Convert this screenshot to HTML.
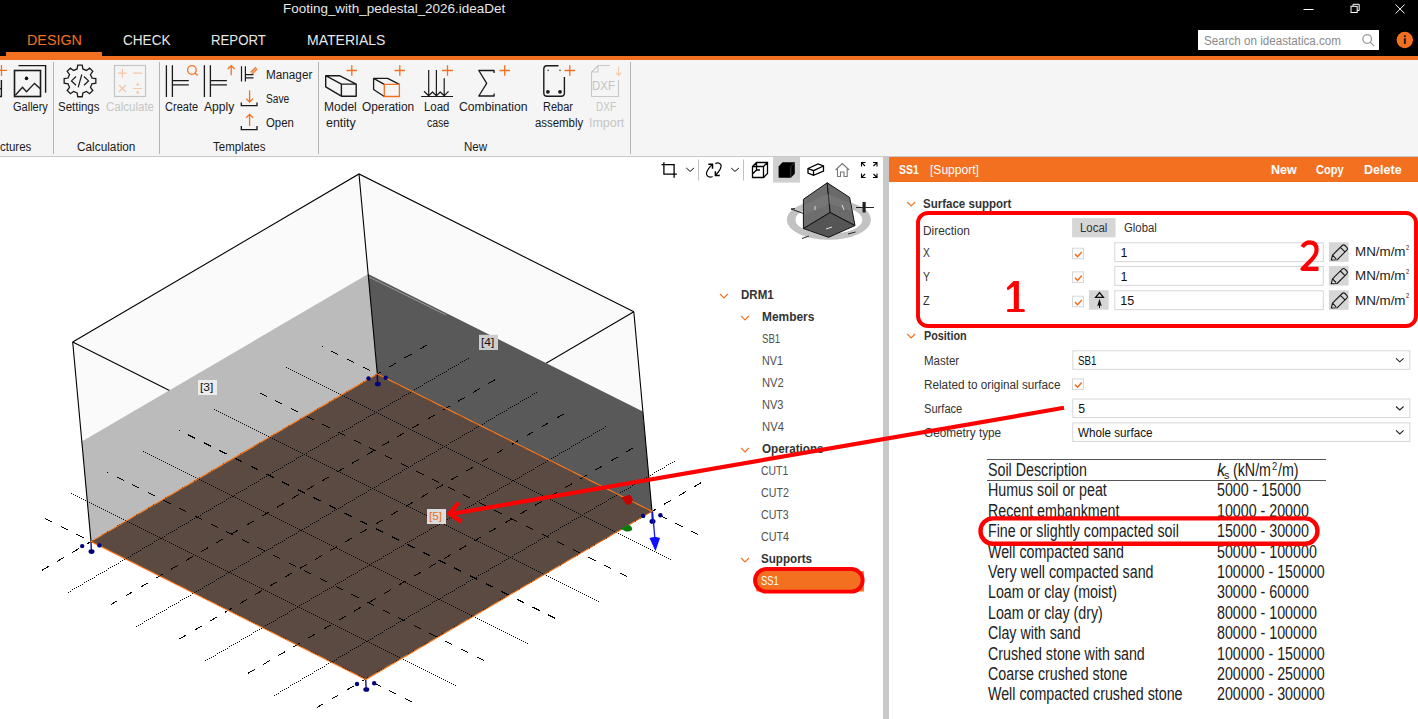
<!DOCTYPE html><html><head><meta charset="utf-8"><style>
*{margin:0;padding:0;box-sizing:border-box}
html,body{width:1418px;height:719px;overflow:hidden;background:#fff;font-family:"Liberation Sans",sans-serif}
.t{position:absolute;white-space:nowrap;line-height:0;transform-origin:0 0}
svg{position:absolute;left:0;top:0}
.ds{stroke-width:1;stroke-dasharray:8 9.5;stroke-dashoffset:8;shape-rendering:crispEdges}
.dt{stroke-width:1;stroke-dasharray:1.3 1.3;shape-rendering:crispEdges}
</style></head><body><div style="position:absolute;left:0px;top:0px;width:1418px;height:56px;background:#000"></div>
<div class="t" style="left:282.80px;top:8.62px;font-size:13.5px;color:#e8e8e8;transform:scaleX(0.9966);">Footing_with_pedestal_2026.ideaDet</div>
<div class="t" style="left:26.50px;top:40.10px;font-size:15px;color:#f37021;transform:scaleX(0.9544);">DESIGN</div>
<div class="t" style="left:122.50px;top:40.10px;font-size:15px;color:#e8e8e8;transform:scaleX(0.9048);">CHECK</div>
<div class="t" style="left:210.70px;top:40.10px;font-size:15px;color:#e8e8e8;transform:scaleX(0.8803);">REPORT</div>
<div class="t" style="left:306.70px;top:40.10px;font-size:15px;color:#e8e8e8;transform:scaleX(0.9342);">MATERIALS</div>
<div style="position:absolute;left:6px;top:52px;width:96px;height:4px;background:#f37021"></div>
<div style="position:absolute;left:0px;top:56px;width:1418px;height:4px;background:#f37021"></div>
<div style="position:absolute;left:1198px;top:30px;width:181px;height:20px;background:#fff"></div>
<div class="t" style="left:1204.00px;top:40.77px;font-size:12.5px;color:#8a8a8a;transform:scaleX(0.9300);">Search on ideastatica.com</div>
<svg width="1418" height="719" viewBox="0 0 1418 719"><g fill="none" stroke="#9a9a9a" stroke-width="1.3"><circle cx="1367.2" cy="39" r="4.3"/><path d="M1370.2 42.1 L1373.8 45.7"/></g>
<circle cx="1404.8" cy="40" r="8.2" fill="#f37021"/><rect x="1403.9" y="38.3" width="1.9" height="5.6" fill="#1a1a1a"/><rect x="1403.9" y="35.2" width="1.9" height="1.9" fill="#1a1a1a"/>
<g fill="none" stroke="#fff" stroke-width="1"><path d="M1303.5 9.5 H1313.5"/><rect x="1351" y="6.3" width="6.2" height="6.2"/><path d="M1353 6.3 V4.3 H1359.2 V10.5 H1357.2"/><path d="M1395.6 4.5 L1404.6 13.5 M1404.6 4.5 L1395.6 13.5"/></g></svg>
<div style="position:absolute;left:0px;top:60px;width:1418px;height:96px;background:#f5f5f5"></div>
<div style="position:absolute;left:0px;top:156px;width:1418px;height:1px;background:#c9c9c9"></div>
<div style="position:absolute;left:53px;top:62px;width:1px;height:92px;background:#b4b4b4"></div>
<div style="position:absolute;left:159px;top:62px;width:1px;height:92px;background:#b4b4b4"></div>
<div style="position:absolute;left:318px;top:62px;width:1px;height:92px;background:#b4b4b4"></div>
<div style="position:absolute;left:630px;top:62px;width:1px;height:92px;background:#b4b4b4"></div>
<div class="t" style="left:0.30px;top:146.74px;font-size:12px;color:#1a1a1a;transform:scaleX(0.9602);">ctures</div>
<div class="t" style="left:76.80px;top:146.74px;font-size:12px;color:#1a1a1a;transform:scaleX(0.9842);">Calculation</div>
<div class="t" style="left:213.20px;top:146.74px;font-size:12px;color:#1a1a1a;transform:scaleX(0.9576);">Templates</div>
<div class="t" style="left:463.50px;top:147.24px;font-size:12px;color:#1a1a1a;transform:scaleX(0.9643);">New</div>
<div class="t" style="left:12.80px;top:107.14px;font-size:12px;color:#1a1a1a;transform:scaleX(0.9175);">Gallery</div>
<div class="t" style="left:58.40px;top:107.14px;font-size:12px;color:#1a1a1a;transform:scaleX(0.9567);">Settings</div>
<div class="t" style="left:164.70px;top:107.14px;font-size:12px;color:#1a1a1a;transform:scaleX(0.9194);">Create</div>
<div class="t" style="left:204.40px;top:107.14px;font-size:12px;color:#1a1a1a;transform:scaleX(1.0067);">Apply</div>
<div class="t" style="left:265.60px;top:75.14px;font-size:12px;color:#1a1a1a;transform:scaleX(0.9780);">Manager</div>
<div class="t" style="left:265.60px;top:98.74px;font-size:12px;color:#1a1a1a;transform:scaleX(0.8480);">Save</div>
<div class="t" style="left:265.60px;top:123.14px;font-size:12px;color:#1a1a1a;transform:scaleX(0.9475);">Open</div>
<div class="t" style="left:323.60px;top:107.14px;font-size:12px;color:#1a1a1a;transform:scaleX(1.0031);">Model</div>
<div class="t" style="left:326.00px;top:122.54px;font-size:12px;color:#1a1a1a;transform:scaleX(1.0356);">entity</div>
<div class="t" style="left:362.30px;top:107.14px;font-size:12px;color:#1a1a1a;transform:scaleX(0.9890);">Operation</div>
<div class="t" style="left:424.00px;top:107.14px;font-size:12px;color:#1a1a1a;transform:scaleX(0.9551);">Load</div>
<div class="t" style="left:426.50px;top:122.54px;font-size:12px;color:#1a1a1a;transform:scaleX(0.8768);">case</div>
<div class="t" style="left:458.60px;top:107.14px;font-size:12px;color:#1a1a1a;transform:scaleX(1.0181);">Combination</div>
<div class="t" style="left:543.00px;top:107.14px;font-size:12px;color:#1a1a1a;transform:scaleX(0.9174);">Rebar</div>
<div class="t" style="left:534.60px;top:122.54px;font-size:12px;color:#1a1a1a;transform:scaleX(0.9507);">assembly</div>
<div class="t" style="left:105.70px;top:107.14px;font-size:12px;color:#c6c6c6;transform:scaleX(0.9592);">Calculate</div>
<div class="t" style="left:596.00px;top:107.14px;font-size:12px;color:#c6c6c6;transform:scaleX(0.8333);">DXF</div>
<div class="t" style="left:589.40px;top:122.54px;font-size:12px;color:#c6c6c6;transform:scaleX(1.0376);">Import</div>
<div class="t" style="left:591.50px;top:86.14px;font-size:12px;color:#c4c4c4;transform:scaleX(0.9583);">DXF</div>
<svg width="1418" height="719" viewBox="0 0 1418 719">
<g fill="none" stroke="#1a1a1a" stroke-width="1.4">
 <path d="M1.4 80 V96.5 H0 M0 88.6 H1.4"/>
 <rect x="14.5" y="70.5" width="26" height="26" stroke-width="1.6"/>
 <path d="M18.5 65.6 H45.6 V92.7" stroke-width="1.4"/>
 <path d="M15.3 95.3 L22.5 87.3 L26.5 91.7 L34.5 83.4 L40.3 88.8" stroke-width="1.3"/>
 <path d="M91.96 78.03 L95.84 78.65 L95.84 83.15 L91.96 83.77 L90.49 87.33 L92.79 90.51 L89.61 93.69 L86.43 91.39 L82.87 92.86 L82.25 96.74 L77.75 96.74 L77.13 92.86 L73.57 91.39 L70.39 93.69 L67.21 90.51 L69.51 87.33 L68.04 83.77 L64.16 83.15 L64.16 78.65 L68.04 78.03 L69.51 74.47 L67.21 71.29 L70.39 68.11 L73.57 70.41 L77.13 68.94 L77.75 65.06 L82.25 65.06 L82.87 68.94 L86.43 70.41 L89.61 68.11 L92.79 71.29 L90.49 74.47Z" stroke-width="1.3"/>
 <path d="M76 76.5 L71.5 80.9 L76 85.3 M84 76.5 L88.5 80.9 L84 85.3 M81.8 74.5 L78.2 87.3" stroke-width="1.2"/>
 <path d="M166.4 65.3 V96.9 M172.4 65.3 V96.9 M172.4 80.6 H188.8 M172.4 84.8 H188.8" stroke-width="1.3"/>
 <path d="M204.4 65.3 V96.9 M210.4 65.3 V96.9 M210.4 80.6 H226.9 M210.4 84.8 H226.9" stroke-width="1.3"/>
 <path d="M241.5 66.3 V81.6 M245.4 66.3 V81.6 M245.4 74.6 H253.5 M245.4 77.8 H253.5" stroke-width="1.2"/>
 <path d="M241.3 102.4 V105.6 H257 V102.4 M241.3 126 V129.6 H257 V126" stroke-width="1.3"/>
</g>
<g fill="none" stroke="#f37021" stroke-width="1.3">
 <path d="M0 70.4 H7 M1.5 65 V76"/>
 <circle cx="191.9" cy="70" r="4.3"/><path d="M194.8 73 L197.6 75.6"/>
 <path d="M231.2 65.6 V75.3 M227.8 69 L231.2 65.6 L234.6 69"/>
 <path d="M250.6 72.5 L256 67.3 M252 74 L257.2 68.8"/>
 <path d="M249.6 90.3 V102 M246.2 98.6 L249.6 102 L253 98.6"/>
 <path d="M249.6 114.3 V126 M246.2 117.7 L249.6 114.3 L253 117.7"/>
</g>
<g fill="none" stroke="#c4c4c4" stroke-width="1.2"><rect x="114.5" y="65.5" width="31" height="31"/></g>
<g fill="none" stroke="#f7c6a6" stroke-width="1.2">
 <path d="M117.9 73.2 H126.9 M122.4 68.7 V77.7 M133.2 73.2 H142.2 M118.9 85 L125.9 92 M125.9 85 L118.9 92 M133.2 88.5 H142.2"/>
 <circle cx="137.7" cy="84.6" r="0.7" fill="#f7c6a6"/><circle cx="137.7" cy="92.4" r="0.7" fill="#f7c6a6"/>
</g>

<g fill="none" stroke="#1a1a1a" stroke-width="1.3" stroke-linejoin="round">
 <path d="M325.7 75.7 H339.4 L356.2 84.1 V96.2 H341.4 L325.7 86.8 Z M325.7 75.7 L341.4 84.1 H356.2 M341.4 84.1 V96.2" stroke-width="1.4"/>
 <path d="M384.3 84.4 L373.6 78.4 H387.6 L399.4 84.4 M373.6 78.4 V89.5 L384.3 96.5"/>
 <path d="M428.7 70.1 V95.5 M436.4 70.1 V95.5 M444.2 78.3 V95.5 M421.2 96.5 H453 M424 91.3 L428.7 95.8 L432.5 92 L436.4 95.8 L440.2 92 L444.2 95.8 L448.5 91.3" stroke-width="1.2"/>
 <path d="M494.1 73 V70.5 H478.8 L486.7 83.4 L478.8 96 H494.1 V93.5" stroke-width="1.3"/>
 <path d="M558.5 65.8 H547 Q543.8 65.8 543.8 69 V93 Q543.8 96.2 547 96.2 H561.2 Q564.4 96.2 564.4 93 V77" stroke-width="1.4"/>
</g>
<circle cx="26.5" cy="78.4" r="1.8" fill="#111"/>
<g fill="#1a1a1a"><circle cx="547.9" cy="91.8" r="1.9"/><circle cx="560" cy="91.8" r="1.9"/><circle cx="548.1" cy="70.2" r="0.7"/><circle cx="560" cy="70.2" r="0.7"/></g>
<g fill="none" stroke="#f37021" stroke-width="1.3">
 <path d="M384.3 84.4 H399.4 V96.5 H384.3 Z" stroke-width="1.3"/>
 <path d="M346.5 70.5 H357 M351.8 65.3 V75.8"/>
 <path d="M394.5 70.5 H405 M399.8 65.3 V75.8"/>
 <path d="M442 70.5 H453 M447.5 65.3 V75.8"/>
 <path d="M499.5 70.5 H510 M504.7 65.3 V75.8"/>
 <path d="M564.5 70.5 H575 M569.8 65.3 V75.8"/>
</g>
<g fill="none" stroke="#c8c8c8" stroke-width="1.1">
 <path d="M610 65.5 H598 L591.5 72 V96.5 H618.5 V80 M591.5 72 H598 V65.5"/>
</g>
<path d="M618.6 66.5 V75.5 M615.8 72.7 L618.6 75.5 L621.4 72.7" stroke="#f5c7a8" stroke-width="1.1" fill="none"/>
</svg>
<div style="position:absolute;left:0px;top:157px;width:883px;height:562px;background:#fff"></div>
<div style="position:absolute;left:883px;top:157px;width:6px;height:562px;background:#c8c8c8"></div>
<div style="position:absolute;left:889px;top:157px;width:529px;height:562px;background:#fff"></div>
<svg width="1418" height="719" viewBox="0 0 1418 719"><defs><clipPath id="vp"><rect x="0" y="157" width="883" height="562"/></clipPath></defs><g clip-path="url(#vp)"><polygon points="72.70,342.00 359.00,174.00 633.80,311.80 652.00,511.40 365.80,679.50 91.00,541.60" fill="#fafafa"/><g stroke="#000" stroke-width="1.1" fill="none"><polyline points="72.70,342.00 359.00,174.00 633.80,311.80"/><line x1="72.7" y1="342.0" x2="347.5" y2="479.9"/><line x1="633.8" y1="311.8" x2="347.5" y2="479.9"/></g><polygon points="81.83,441.60 368.13,274.00 377.30,374.00 91.00,541.60" fill="#bbbbbb"/><polygon points="368.13,274.00 642.83,411.40 652.00,511.40 377.30,374.00" fill="#595959"/><line x1="369" y1="277" x2="446" y2="315" stroke="#9a9a9a" stroke-width="1"/><polygon points="377.30,374.00 652.00,511.40 365.80,679.50 91.00,541.60" fill="#5a4a42"/><g fill="none" stroke="#000"><line x1="33.74" y1="575.12" x2="434.56" y2="340.48" class="ds"/><line x1="706.94" y1="538.88" x2="322.36" y2="346.52" class="ds"/><line x1="102.42" y1="609.47" x2="503.24" y2="374.83" class="ds"/><line x1="635.37" y1="580.78" x2="250.79" y2="388.42" class="ds"/><line x1="171.09" y1="643.82" x2="571.91" y2="409.18" class="ds"/><line x1="563.79" y1="622.68" x2="179.21" y2="430.32" class="ds"/><line x1="239.76" y1="678.17" x2="640.59" y2="443.53" class="ds"/><line x1="492.21" y1="664.58" x2="107.63" y2="472.22" class="ds"/><line x1="308.44" y1="712.52" x2="709.26" y2="477.88" class="ds"/><line x1="420.64" y1="706.48" x2="36.06" y2="514.12" class="ds"/></g><path d="M68 592h1v1h-1zM70 591h1v1h-1zM72 589h1v1h-1zM74 588h1v1h-1zM76 587h1v1h-1zM78 586h1v1h-1zM80 585h1v1h-1zM82 584h1v1h-1zM84 582h1v1h-1zM86 581h1v1h-1zM88 580h1v1h-1zM90 579h1v1h-1zM92 578h1v1h-1zM94 577h1v1h-1zM96 575h1v1h-1zM98 574h1v1h-1zM100 573h1v1h-1zM102 572h1v1h-1zM104 571h1v1h-1zM106 570h1v1h-1zM108 568h1v1h-1zM110 567h1v1h-1zM112 566h1v1h-1zM114 565h1v1h-1zM116 564h1v1h-1zM118 563h1v1h-1zM120 561h1v1h-1zM122 560h1v1h-1zM124 559h1v1h-1zM126 558h1v1h-1zM128 557h1v1h-1zM130 556h1v1h-1zM132 554h1v1h-1zM134 553h1v1h-1zM136 552h1v1h-1zM138 551h1v1h-1zM140 550h1v1h-1zM142 548h1v1h-1zM144 547h1v1h-1zM146 546h1v1h-1zM148 545h1v1h-1zM150 544h1v1h-1zM152 543h1v1h-1zM154 541h1v1h-1zM156 540h1v1h-1zM158 539h1v1h-1zM160 538h1v1h-1zM162 537h1v1h-1zM164 536h1v1h-1zM166 534h1v1h-1zM168 533h1v1h-1zM170 532h1v1h-1zM172 531h1v1h-1zM174 530h1v1h-1zM176 529h1v1h-1zM178 527h1v1h-1zM180 526h1v1h-1zM182 525h1v1h-1zM184 524h1v1h-1zM186 523h1v1h-1zM188 522h1v1h-1zM190 520h1v1h-1zM192 519h1v1h-1zM194 518h1v1h-1zM196 517h1v1h-1zM198 516h1v1h-1zM200 515h1v1h-1zM202 513h1v1h-1zM204 512h1v1h-1zM206 511h1v1h-1zM208 510h1v1h-1zM210 509h1v1h-1zM212 508h1v1h-1zM214 506h1v1h-1zM216 505h1v1h-1zM218 504h1v1h-1zM220 503h1v1h-1zM222 502h1v1h-1zM224 501h1v1h-1zM226 499h1v1h-1zM228 498h1v1h-1zM230 497h1v1h-1zM232 496h1v1h-1zM234 495h1v1h-1zM236 493h1v1h-1zM238 492h1v1h-1zM240 491h1v1h-1zM242 490h1v1h-1zM244 489h1v1h-1zM246 488h1v1h-1zM248 486h1v1h-1zM250 485h1v1h-1zM252 484h1v1h-1zM254 483h1v1h-1zM256 482h1v1h-1zM258 481h1v1h-1zM260 479h1v1h-1zM262 478h1v1h-1zM264 477h1v1h-1zM266 476h1v1h-1zM268 475h1v1h-1zM270 474h1v1h-1zM272 472h1v1h-1zM274 471h1v1h-1zM276 470h1v1h-1zM278 469h1v1h-1zM280 468h1v1h-1zM282 467h1v1h-1zM284 465h1v1h-1zM286 464h1v1h-1zM288 463h1v1h-1zM290 462h1v1h-1zM292 461h1v1h-1zM294 460h1v1h-1zM296 458h1v1h-1zM298 457h1v1h-1zM300 456h1v1h-1zM302 455h1v1h-1zM304 454h1v1h-1zM306 453h1v1h-1zM308 451h1v1h-1zM310 450h1v1h-1zM312 449h1v1h-1zM314 448h1v1h-1zM316 447h1v1h-1zM318 446h1v1h-1zM320 444h1v1h-1zM322 443h1v1h-1zM324 442h1v1h-1zM326 441h1v1h-1zM328 440h1v1h-1zM330 438h1v1h-1zM332 437h1v1h-1zM334 436h1v1h-1zM336 435h1v1h-1zM338 434h1v1h-1zM340 433h1v1h-1zM342 431h1v1h-1zM344 430h1v1h-1zM346 429h1v1h-1zM348 428h1v1h-1zM350 427h1v1h-1zM352 426h1v1h-1zM354 424h1v1h-1zM356 423h1v1h-1zM358 422h1v1h-1zM360 421h1v1h-1zM362 420h1v1h-1zM364 419h1v1h-1zM366 417h1v1h-1zM368 416h1v1h-1zM370 415h1v1h-1zM372 414h1v1h-1zM374 413h1v1h-1zM376 412h1v1h-1zM378 410h1v1h-1zM380 409h1v1h-1zM382 408h1v1h-1zM384 407h1v1h-1zM386 406h1v1h-1zM388 405h1v1h-1zM390 403h1v1h-1zM392 402h1v1h-1zM394 401h1v1h-1zM396 400h1v1h-1zM398 399h1v1h-1zM400 398h1v1h-1zM402 396h1v1h-1zM404 395h1v1h-1zM406 394h1v1h-1zM408 393h1v1h-1zM410 392h1v1h-1zM412 391h1v1h-1zM414 389h1v1h-1zM416 388h1v1h-1zM418 387h1v1h-1zM420 386h1v1h-1zM422 385h1v1h-1zM424 383h1v1h-1zM426 382h1v1h-1zM428 381h1v1h-1zM430 380h1v1h-1zM432 379h1v1h-1zM434 378h1v1h-1zM436 376h1v1h-1zM438 375h1v1h-1zM440 374h1v1h-1zM442 373h1v1h-1zM444 372h1v1h-1zM446 371h1v1h-1zM448 369h1v1h-1zM450 368h1v1h-1zM452 367h1v1h-1zM454 366h1v1h-1zM456 365h1v1h-1zM458 364h1v1h-1zM460 362h1v1h-1zM462 361h1v1h-1zM464 360h1v1h-1zM466 359h1v1h-1zM468 358h1v1h-1zM286 367h1v1h-1zM288 368h1v1h-1zM290 369h1v1h-1zM292 370h1v1h-1zM294 371h1v1h-1zM296 372h1v1h-1zM298 373h1v1h-1zM300 374h1v1h-1zM302 375h1v1h-1zM304 376h1v1h-1zM306 377h1v1h-1zM308 378h1v1h-1zM310 379h1v1h-1zM312 380h1v1h-1zM314 381h1v1h-1zM316 382h1v1h-1zM318 383h1v1h-1zM320 384h1v1h-1zM322 385h1v1h-1zM324 386h1v1h-1zM326 387h1v1h-1zM328 388h1v1h-1zM330 389h1v1h-1zM332 390h1v1h-1zM334 391h1v1h-1zM336 392h1v1h-1zM338 393h1v1h-1zM340 394h1v1h-1zM342 395h1v1h-1zM344 396h1v1h-1zM346 397h1v1h-1zM348 398h1v1h-1zM350 399h1v1h-1zM352 400h1v1h-1zM354 401h1v1h-1zM356 402h1v1h-1zM358 403h1v1h-1zM360 404h1v1h-1zM362 405h1v1h-1zM364 406h1v1h-1zM366 407h1v1h-1zM368 408h1v1h-1zM370 409h1v1h-1zM372 410h1v1h-1zM374 411h1v1h-1zM376 412h1v1h-1zM378 413h1v1h-1zM380 414h1v1h-1zM382 415h1v1h-1zM384 416h1v1h-1zM386 417h1v1h-1zM388 418h1v1h-1zM390 419h1v1h-1zM392 420h1v1h-1zM394 421h1v1h-1zM396 422h1v1h-1zM398 423h1v1h-1zM400 424h1v1h-1zM402 425h1v1h-1zM404 426h1v1h-1zM406 427h1v1h-1zM408 428h1v1h-1zM410 429h1v1h-1zM412 430h1v1h-1zM414 431h1v1h-1zM416 432h1v1h-1zM418 433h1v1h-1zM420 434h1v1h-1zM422 435h1v1h-1zM424 436h1v1h-1zM426 437h1v1h-1zM428 438h1v1h-1zM430 439h1v1h-1zM432 440h1v1h-1zM434 441h1v1h-1zM436 442h1v1h-1zM438 443h1v1h-1zM440 444h1v1h-1zM442 445h1v1h-1zM444 446h1v1h-1zM446 447h1v1h-1zM448 448h1v1h-1zM450 449h1v1h-1zM452 450h1v1h-1zM454 451h1v1h-1zM456 452h1v1h-1zM458 453h1v1h-1zM460 454h1v1h-1zM462 455h1v1h-1zM464 456h1v1h-1zM466 457h1v1h-1zM468 458h1v1h-1zM470 459h1v1h-1zM472 460h1v1h-1zM474 461h1v1h-1zM476 462h1v1h-1zM478 463h1v1h-1zM480 464h1v1h-1zM482 465h1v1h-1zM484 466h1v1h-1zM486 467h1v1h-1zM488 468h1v1h-1zM490 469h1v1h-1zM492 470h1v1h-1zM494 471h1v1h-1zM496 472h1v1h-1zM498 473h1v1h-1zM500 474h1v1h-1zM502 475h1v1h-1zM504 476h1v1h-1zM506 477h1v1h-1zM508 478h1v1h-1zM510 479h1v1h-1zM512 480h1v1h-1zM514 481h1v1h-1zM516 482h1v1h-1zM518 483h1v1h-1zM520 484h1v1h-1zM522 485h1v1h-1zM524 486h1v1h-1zM526 487h1v1h-1zM528 488h1v1h-1zM530 489h1v1h-1zM532 490h1v1h-1zM534 491h1v1h-1zM536 492h1v1h-1zM538 493h1v1h-1zM540 494h1v1h-1zM542 495h1v1h-1zM544 496h1v1h-1zM546 497h1v1h-1zM548 498h1v1h-1zM550 499h1v1h-1zM552 500h1v1h-1zM554 501h1v1h-1zM556 502h1v1h-1zM558 503h1v1h-1zM560 504h1v1h-1zM562 505h1v1h-1zM564 506h1v1h-1zM566 507h1v1h-1zM568 508h1v1h-1zM570 509h1v1h-1zM572 510h1v1h-1zM574 511h1v1h-1zM576 512h1v1h-1zM578 513h1v1h-1zM580 514h1v1h-1zM582 515h1v1h-1zM584 516h1v1h-1zM586 517h1v1h-1zM588 518h1v1h-1zM590 519h1v1h-1zM592 520h1v1h-1zM594 521h1v1h-1zM596 522h1v1h-1zM598 523h1v1h-1zM600 524h1v1h-1zM602 525h1v1h-1zM604 526h1v1h-1zM606 527h1v1h-1zM608 528h1v1h-1zM610 529h1v1h-1zM612 530h1v1h-1zM614 531h1v1h-1zM616 532h1v1h-1zM618 533h1v1h-1zM620 534h1v1h-1zM622 535h1v1h-1zM624 536h1v1h-1zM626 537h1v1h-1zM628 538h1v1h-1zM630 539h1v1h-1zM632 540h1v1h-1zM634 541h1v1h-1zM636 542h1v1h-1zM638 543h1v1h-1zM640 544h1v1h-1zM642 545h1v1h-1zM644 546h1v1h-1zM646 547h1v1h-1zM648 548h1v1h-1zM650 549h1v1h-1zM652 550h1v1h-1zM654 551h1v1h-1zM656 552h1v1h-1zM658 553h1v1h-1zM660 554h1v1h-1zM662 555h1v1h-1zM664 556h1v1h-1zM666 557h1v1h-1zM668 558h1v1h-1zM670 559h1v1h-1zM136 626h1v1h-1zM138 625h1v1h-1zM140 624h1v1h-1zM142 623h1v1h-1zM144 621h1v1h-1zM146 620h1v1h-1zM148 619h1v1h-1zM150 618h1v1h-1zM152 617h1v1h-1zM154 616h1v1h-1zM156 614h1v1h-1zM158 613h1v1h-1zM160 612h1v1h-1zM162 611h1v1h-1zM164 610h1v1h-1zM166 609h1v1h-1zM168 607h1v1h-1zM170 606h1v1h-1zM172 605h1v1h-1zM174 604h1v1h-1zM176 603h1v1h-1zM178 602h1v1h-1zM180 600h1v1h-1zM182 599h1v1h-1zM184 598h1v1h-1zM186 597h1v1h-1zM188 596h1v1h-1zM190 595h1v1h-1zM192 593h1v1h-1zM194 592h1v1h-1zM196 591h1v1h-1zM198 590h1v1h-1zM200 589h1v1h-1zM202 588h1v1h-1zM204 586h1v1h-1zM206 585h1v1h-1zM208 584h1v1h-1zM210 583h1v1h-1zM212 582h1v1h-1zM214 581h1v1h-1zM216 579h1v1h-1zM218 578h1v1h-1zM220 577h1v1h-1zM222 576h1v1h-1zM224 575h1v1h-1zM226 573h1v1h-1zM228 572h1v1h-1zM230 571h1v1h-1zM232 570h1v1h-1zM234 569h1v1h-1zM236 568h1v1h-1zM238 566h1v1h-1zM240 565h1v1h-1zM242 564h1v1h-1zM244 563h1v1h-1zM246 562h1v1h-1zM248 561h1v1h-1zM250 559h1v1h-1zM252 558h1v1h-1zM254 557h1v1h-1zM256 556h1v1h-1zM258 555h1v1h-1zM260 554h1v1h-1zM262 552h1v1h-1zM264 551h1v1h-1zM266 550h1v1h-1zM268 549h1v1h-1zM270 548h1v1h-1zM272 547h1v1h-1zM274 545h1v1h-1zM276 544h1v1h-1zM278 543h1v1h-1zM280 542h1v1h-1zM282 541h1v1h-1zM284 540h1v1h-1zM286 538h1v1h-1zM288 537h1v1h-1zM290 536h1v1h-1zM292 535h1v1h-1zM294 534h1v1h-1zM296 533h1v1h-1zM298 531h1v1h-1zM300 530h1v1h-1zM302 529h1v1h-1zM304 528h1v1h-1zM306 527h1v1h-1zM308 526h1v1h-1zM310 524h1v1h-1zM312 523h1v1h-1zM314 522h1v1h-1zM316 521h1v1h-1zM318 520h1v1h-1zM320 518h1v1h-1zM322 517h1v1h-1zM324 516h1v1h-1zM326 515h1v1h-1zM328 514h1v1h-1zM330 513h1v1h-1zM332 511h1v1h-1zM334 510h1v1h-1zM336 509h1v1h-1zM338 508h1v1h-1zM340 507h1v1h-1zM342 506h1v1h-1zM344 504h1v1h-1zM346 503h1v1h-1zM348 502h1v1h-1zM350 501h1v1h-1zM352 500h1v1h-1zM354 499h1v1h-1zM356 497h1v1h-1zM358 496h1v1h-1zM360 495h1v1h-1zM362 494h1v1h-1zM364 493h1v1h-1zM366 492h1v1h-1zM368 490h1v1h-1zM370 489h1v1h-1zM372 488h1v1h-1zM374 487h1v1h-1zM376 486h1v1h-1zM378 485h1v1h-1zM380 483h1v1h-1zM382 482h1v1h-1zM384 481h1v1h-1zM386 480h1v1h-1zM388 479h1v1h-1zM390 478h1v1h-1zM392 476h1v1h-1zM394 475h1v1h-1zM396 474h1v1h-1zM398 473h1v1h-1zM400 472h1v1h-1zM402 470h1v1h-1zM404 469h1v1h-1zM406 468h1v1h-1zM408 467h1v1h-1zM410 466h1v1h-1zM412 465h1v1h-1zM414 463h1v1h-1zM416 462h1v1h-1zM418 461h1v1h-1zM420 460h1v1h-1zM422 459h1v1h-1zM424 458h1v1h-1zM426 456h1v1h-1zM428 455h1v1h-1zM430 454h1v1h-1zM432 453h1v1h-1zM434 452h1v1h-1zM436 451h1v1h-1zM438 449h1v1h-1zM440 448h1v1h-1zM442 447h1v1h-1zM444 446h1v1h-1zM446 445h1v1h-1zM448 444h1v1h-1zM450 442h1v1h-1zM452 441h1v1h-1zM454 440h1v1h-1zM456 439h1v1h-1zM458 438h1v1h-1zM460 437h1v1h-1zM462 435h1v1h-1zM464 434h1v1h-1zM466 433h1v1h-1zM468 432h1v1h-1zM470 431h1v1h-1zM472 430h1v1h-1zM474 428h1v1h-1zM476 427h1v1h-1zM478 426h1v1h-1zM480 425h1v1h-1zM482 424h1v1h-1zM484 423h1v1h-1zM486 421h1v1h-1zM488 420h1v1h-1zM490 419h1v1h-1zM492 418h1v1h-1zM494 417h1v1h-1zM496 415h1v1h-1zM498 414h1v1h-1zM500 413h1v1h-1zM502 412h1v1h-1zM504 411h1v1h-1zM506 410h1v1h-1zM508 408h1v1h-1zM510 407h1v1h-1zM512 406h1v1h-1zM514 405h1v1h-1zM516 404h1v1h-1zM518 403h1v1h-1zM520 401h1v1h-1zM522 400h1v1h-1zM524 399h1v1h-1zM526 398h1v1h-1zM528 397h1v1h-1zM530 396h1v1h-1zM532 394h1v1h-1zM534 393h1v1h-1zM536 392h1v1h-1zM214 409h1v1h-1zM216 410h1v1h-1zM218 411h1v1h-1zM220 412h1v1h-1zM222 413h1v1h-1zM224 414h1v1h-1zM226 415h1v1h-1zM228 416h1v1h-1zM230 417h1v1h-1zM232 418h1v1h-1zM234 419h1v1h-1zM236 420h1v1h-1zM238 421h1v1h-1zM240 422h1v1h-1zM242 423h1v1h-1zM244 424h1v1h-1zM246 425h1v1h-1zM248 426h1v1h-1zM250 427h1v1h-1zM252 428h1v1h-1zM254 429h1v1h-1zM256 430h1v1h-1zM258 431h1v1h-1zM260 432h1v1h-1zM262 433h1v1h-1zM264 434h1v1h-1zM266 435h1v1h-1zM268 436h1v1h-1zM270 437h1v1h-1zM272 438h1v1h-1zM274 439h1v1h-1zM276 440h1v1h-1zM278 441h1v1h-1zM280 442h1v1h-1zM282 443h1v1h-1zM284 444h1v1h-1zM286 445h1v1h-1zM288 446h1v1h-1zM290 447h1v1h-1zM292 448h1v1h-1zM294 449h1v1h-1zM296 450h1v1h-1zM298 451h1v1h-1zM300 452h1v1h-1zM302 453h1v1h-1zM304 454h1v1h-1zM306 455h1v1h-1zM308 456h1v1h-1zM310 457h1v1h-1zM312 458h1v1h-1zM314 459h1v1h-1zM316 460h1v1h-1zM318 461h1v1h-1zM320 462h1v1h-1zM322 463h1v1h-1zM324 464h1v1h-1zM326 465h1v1h-1zM328 466h1v1h-1zM330 467h1v1h-1zM332 468h1v1h-1zM334 469h1v1h-1zM336 470h1v1h-1zM338 471h1v1h-1zM340 472h1v1h-1zM342 473h1v1h-1zM344 474h1v1h-1zM346 475h1v1h-1zM348 476h1v1h-1zM350 477h1v1h-1zM352 478h1v1h-1zM354 479h1v1h-1zM356 480h1v1h-1zM358 481h1v1h-1zM360 482h1v1h-1zM362 483h1v1h-1zM364 484h1v1h-1zM366 485h1v1h-1zM368 486h1v1h-1zM370 487h1v1h-1zM372 488h1v1h-1zM374 489h1v1h-1zM376 490h1v1h-1zM378 491h1v1h-1zM380 492h1v1h-1zM382 493h1v1h-1zM384 494h1v1h-1zM386 495h1v1h-1zM388 496h1v1h-1zM390 497h1v1h-1zM392 498h1v1h-1zM394 499h1v1h-1zM396 500h1v1h-1zM398 501h1v1h-1zM400 502h1v1h-1zM402 503h1v1h-1zM404 504h1v1h-1zM406 505h1v1h-1zM408 506h1v1h-1zM410 507h1v1h-1zM412 508h1v1h-1zM414 509h1v1h-1zM416 510h1v1h-1zM418 511h1v1h-1zM420 512h1v1h-1zM422 513h1v1h-1zM424 514h1v1h-1zM426 515h1v1h-1zM428 516h1v1h-1zM430 517h1v1h-1zM432 518h1v1h-1zM434 519h1v1h-1zM436 520h1v1h-1zM438 521h1v1h-1zM440 522h1v1h-1zM442 523h1v1h-1zM444 524h1v1h-1zM446 525h1v1h-1zM448 526h1v1h-1zM450 527h1v1h-1zM452 528h1v1h-1zM454 529h1v1h-1zM456 530h1v1h-1zM458 531h1v1h-1zM460 532h1v1h-1zM462 533h1v1h-1zM464 534h1v1h-1zM466 535h1v1h-1zM468 536h1v1h-1zM470 537h1v1h-1zM472 538h1v1h-1zM474 539h1v1h-1zM476 540h1v1h-1zM478 541h1v1h-1zM480 542h1v1h-1zM482 543h1v1h-1zM484 544h1v1h-1zM486 545h1v1h-1zM488 546h1v1h-1zM490 547h1v1h-1zM492 548h1v1h-1zM494 549h1v1h-1zM496 550h1v1h-1zM498 551h1v1h-1zM500 552h1v1h-1zM502 553h1v1h-1zM504 554h1v1h-1zM506 555h1v1h-1zM508 556h1v1h-1zM510 557h1v1h-1zM512 558h1v1h-1zM514 559h1v1h-1zM516 560h1v1h-1zM518 561h1v1h-1zM520 562h1v1h-1zM522 563h1v1h-1zM524 564h1v1h-1zM526 565h1v1h-1zM528 566h1v1h-1zM530 567h1v1h-1zM532 568h1v1h-1zM534 569h1v1h-1zM536 570h1v1h-1zM538 571h1v1h-1zM540 572h1v1h-1zM542 573h1v1h-1zM544 574h1v1h-1zM546 575h1v1h-1zM548 576h1v1h-1zM550 577h1v1h-1zM552 578h1v1h-1zM554 579h1v1h-1zM556 580h1v1h-1zM558 581h1v1h-1zM560 582h1v1h-1zM562 583h1v1h-1zM564 584h1v1h-1zM566 585h1v1h-1zM568 586h1v1h-1zM570 587h1v1h-1zM572 588h1v1h-1zM574 589h1v1h-1zM576 590h1v1h-1zM578 591h1v1h-1zM580 592h1v1h-1zM582 593h1v1h-1zM584 594h1v1h-1zM586 595h1v1h-1zM588 596h1v1h-1zM590 597h1v1h-1zM592 598h1v1h-1zM594 599h1v1h-1zM596 600h1v1h-1zM598 601h1v1h-1zM205 660h1v1h-1zM207 659h1v1h-1zM209 658h1v1h-1zM211 657h1v1h-1zM213 656h1v1h-1zM215 655h1v1h-1zM217 653h1v1h-1zM219 652h1v1h-1zM221 651h1v1h-1zM223 650h1v1h-1zM225 649h1v1h-1zM227 648h1v1h-1zM229 646h1v1h-1zM231 645h1v1h-1zM233 644h1v1h-1zM235 643h1v1h-1zM237 642h1v1h-1zM239 641h1v1h-1zM241 639h1v1h-1zM243 638h1v1h-1zM245 637h1v1h-1zM247 636h1v1h-1zM249 635h1v1h-1zM251 634h1v1h-1zM253 632h1v1h-1zM255 631h1v1h-1zM257 630h1v1h-1zM259 629h1v1h-1zM261 628h1v1h-1zM263 627h1v1h-1zM265 625h1v1h-1zM267 624h1v1h-1zM269 623h1v1h-1zM271 622h1v1h-1zM273 621h1v1h-1zM275 620h1v1h-1zM277 618h1v1h-1zM279 617h1v1h-1zM281 616h1v1h-1zM283 615h1v1h-1zM285 614h1v1h-1zM287 613h1v1h-1zM289 611h1v1h-1zM291 610h1v1h-1zM293 609h1v1h-1zM295 608h1v1h-1zM297 607h1v1h-1zM299 605h1v1h-1zM301 604h1v1h-1zM303 603h1v1h-1zM305 602h1v1h-1zM307 601h1v1h-1zM309 600h1v1h-1zM311 598h1v1h-1zM313 597h1v1h-1zM315 596h1v1h-1zM317 595h1v1h-1zM319 594h1v1h-1zM321 593h1v1h-1zM323 591h1v1h-1zM325 590h1v1h-1zM327 589h1v1h-1zM329 588h1v1h-1zM331 587h1v1h-1zM333 586h1v1h-1zM335 584h1v1h-1zM337 583h1v1h-1zM339 582h1v1h-1zM341 581h1v1h-1zM343 580h1v1h-1zM345 579h1v1h-1zM347 577h1v1h-1zM349 576h1v1h-1zM351 575h1v1h-1zM353 574h1v1h-1zM355 573h1v1h-1zM357 572h1v1h-1zM359 570h1v1h-1zM361 569h1v1h-1zM363 568h1v1h-1zM365 567h1v1h-1zM367 566h1v1h-1zM369 565h1v1h-1zM371 563h1v1h-1zM373 562h1v1h-1zM375 561h1v1h-1zM377 560h1v1h-1zM379 559h1v1h-1zM381 558h1v1h-1zM383 556h1v1h-1zM385 555h1v1h-1zM387 554h1v1h-1zM389 553h1v1h-1zM391 552h1v1h-1zM393 550h1v1h-1zM395 549h1v1h-1zM397 548h1v1h-1zM399 547h1v1h-1zM401 546h1v1h-1zM403 545h1v1h-1zM405 543h1v1h-1zM407 542h1v1h-1zM409 541h1v1h-1zM411 540h1v1h-1zM413 539h1v1h-1zM415 538h1v1h-1zM417 536h1v1h-1zM419 535h1v1h-1zM421 534h1v1h-1zM423 533h1v1h-1zM425 532h1v1h-1zM427 531h1v1h-1zM429 529h1v1h-1zM431 528h1v1h-1zM433 527h1v1h-1zM435 526h1v1h-1zM437 525h1v1h-1zM439 524h1v1h-1zM441 522h1v1h-1zM443 521h1v1h-1zM445 520h1v1h-1zM447 519h1v1h-1zM449 518h1v1h-1zM451 517h1v1h-1zM453 515h1v1h-1zM455 514h1v1h-1zM457 513h1v1h-1zM459 512h1v1h-1zM461 511h1v1h-1zM463 510h1v1h-1zM465 508h1v1h-1zM467 507h1v1h-1zM469 506h1v1h-1zM471 505h1v1h-1zM473 504h1v1h-1zM475 503h1v1h-1zM477 501h1v1h-1zM479 500h1v1h-1zM481 499h1v1h-1zM483 498h1v1h-1zM485 497h1v1h-1zM487 495h1v1h-1zM489 494h1v1h-1zM491 493h1v1h-1zM493 492h1v1h-1zM495 491h1v1h-1zM497 490h1v1h-1zM499 488h1v1h-1zM501 487h1v1h-1zM503 486h1v1h-1zM505 485h1v1h-1zM507 484h1v1h-1zM509 483h1v1h-1zM511 481h1v1h-1zM513 480h1v1h-1zM515 479h1v1h-1zM517 478h1v1h-1zM519 477h1v1h-1zM521 476h1v1h-1zM523 474h1v1h-1zM525 473h1v1h-1zM527 472h1v1h-1zM529 471h1v1h-1zM531 470h1v1h-1zM533 469h1v1h-1zM535 467h1v1h-1zM537 466h1v1h-1zM539 465h1v1h-1zM541 464h1v1h-1zM543 463h1v1h-1zM545 462h1v1h-1zM547 460h1v1h-1zM549 459h1v1h-1zM551 458h1v1h-1zM553 457h1v1h-1zM555 456h1v1h-1zM557 455h1v1h-1zM559 453h1v1h-1zM561 452h1v1h-1zM563 451h1v1h-1zM565 450h1v1h-1zM567 449h1v1h-1zM569 448h1v1h-1zM571 446h1v1h-1zM573 445h1v1h-1zM575 444h1v1h-1zM577 443h1v1h-1zM579 442h1v1h-1zM581 440h1v1h-1zM583 439h1v1h-1zM585 438h1v1h-1zM587 437h1v1h-1zM589 436h1v1h-1zM591 435h1v1h-1zM593 433h1v1h-1zM595 432h1v1h-1zM597 431h1v1h-1zM599 430h1v1h-1zM601 429h1v1h-1zM603 428h1v1h-1zM605 426h1v1h-1zM143 451h1v1h-1zM145 452h1v1h-1zM147 453h1v1h-1zM149 454h1v1h-1zM151 455h1v1h-1zM153 456h1v1h-1zM155 457h1v1h-1zM157 458h1v1h-1zM159 459h1v1h-1zM161 460h1v1h-1zM163 461h1v1h-1zM165 462h1v1h-1zM167 463h1v1h-1zM169 464h1v1h-1zM171 465h1v1h-1zM173 466h1v1h-1zM175 467h1v1h-1zM177 468h1v1h-1zM179 469h1v1h-1zM181 470h1v1h-1zM183 471h1v1h-1zM185 472h1v1h-1zM187 473h1v1h-1zM189 474h1v1h-1zM191 475h1v1h-1zM193 476h1v1h-1zM195 477h1v1h-1zM197 478h1v1h-1zM199 479h1v1h-1zM201 480h1v1h-1zM203 481h1v1h-1zM205 482h1v1h-1zM207 483h1v1h-1zM209 484h1v1h-1zM211 485h1v1h-1zM213 486h1v1h-1zM215 487h1v1h-1zM217 488h1v1h-1zM219 489h1v1h-1zM221 490h1v1h-1zM223 491h1v1h-1zM225 492h1v1h-1zM227 493h1v1h-1zM229 494h1v1h-1zM231 495h1v1h-1zM233 496h1v1h-1zM235 497h1v1h-1zM237 498h1v1h-1zM239 499h1v1h-1zM241 500h1v1h-1zM243 501h1v1h-1zM245 502h1v1h-1zM247 503h1v1h-1zM249 504h1v1h-1zM251 505h1v1h-1zM253 506h1v1h-1zM255 507h1v1h-1zM257 508h1v1h-1zM259 509h1v1h-1zM261 510h1v1h-1zM263 511h1v1h-1zM265 512h1v1h-1zM267 513h1v1h-1zM269 514h1v1h-1zM271 515h1v1h-1zM273 516h1v1h-1zM275 517h1v1h-1zM277 518h1v1h-1zM279 519h1v1h-1zM281 520h1v1h-1zM283 521h1v1h-1zM285 522h1v1h-1zM287 523h1v1h-1zM289 524h1v1h-1zM291 525h1v1h-1zM293 526h1v1h-1zM295 527h1v1h-1zM297 528h1v1h-1zM299 529h1v1h-1zM301 530h1v1h-1zM303 531h1v1h-1zM305 532h1v1h-1zM307 533h1v1h-1zM309 534h1v1h-1zM311 535h1v1h-1zM313 536h1v1h-1zM315 537h1v1h-1zM317 538h1v1h-1zM319 539h1v1h-1zM321 540h1v1h-1zM323 541h1v1h-1zM325 542h1v1h-1zM327 543h1v1h-1zM329 544h1v1h-1zM331 545h1v1h-1zM333 546h1v1h-1zM335 547h1v1h-1zM337 548h1v1h-1zM339 549h1v1h-1zM341 550h1v1h-1zM343 551h1v1h-1zM345 552h1v1h-1zM347 553h1v1h-1zM349 554h1v1h-1zM351 555h1v1h-1zM353 556h1v1h-1zM355 557h1v1h-1zM357 558h1v1h-1zM359 559h1v1h-1zM361 560h1v1h-1zM363 561h1v1h-1zM365 562h1v1h-1zM367 563h1v1h-1zM369 564h1v1h-1zM371 565h1v1h-1zM373 566h1v1h-1zM375 567h1v1h-1zM377 568h1v1h-1zM379 569h1v1h-1zM381 570h1v1h-1zM383 571h1v1h-1zM385 572h1v1h-1zM387 573h1v1h-1zM389 574h1v1h-1zM391 575h1v1h-1zM393 576h1v1h-1zM395 577h1v1h-1zM397 578h1v1h-1zM399 579h1v1h-1zM401 580h1v1h-1zM403 581h1v1h-1zM405 582h1v1h-1zM407 583h1v1h-1zM409 584h1v1h-1zM411 585h1v1h-1zM413 586h1v1h-1zM415 587h1v1h-1zM417 588h1v1h-1zM419 589h1v1h-1zM421 590h1v1h-1zM423 591h1v1h-1zM425 592h1v1h-1zM427 593h1v1h-1zM429 594h1v1h-1zM431 595h1v1h-1zM433 596h1v1h-1zM435 597h1v1h-1zM437 598h1v1h-1zM439 599h1v1h-1zM441 600h1v1h-1zM443 601h1v1h-1zM445 602h1v1h-1zM447 603h1v1h-1zM449 604h1v1h-1zM451 605h1v1h-1zM453 606h1v1h-1zM455 607h1v1h-1zM457 608h1v1h-1zM459 609h1v1h-1zM461 610h1v1h-1zM463 611h1v1h-1zM465 612h1v1h-1zM467 613h1v1h-1zM469 614h1v1h-1zM471 615h1v1h-1zM473 616h1v1h-1zM475 617h1v1h-1zM477 618h1v1h-1zM479 619h1v1h-1zM481 620h1v1h-1zM483 621h1v1h-1zM485 622h1v1h-1zM487 623h1v1h-1zM489 624h1v1h-1zM491 625h1v1h-1zM493 626h1v1h-1zM495 627h1v1h-1zM497 628h1v1h-1zM499 629h1v1h-1zM501 630h1v1h-1zM503 631h1v1h-1zM505 632h1v1h-1zM507 633h1v1h-1zM509 634h1v1h-1zM511 635h1v1h-1zM513 636h1v1h-1zM515 637h1v1h-1zM517 638h1v1h-1zM519 639h1v1h-1zM521 640h1v1h-1zM523 641h1v1h-1zM525 642h1v1h-1zM527 643h1v1h-1zM274 695h1v1h-1zM276 694h1v1h-1zM278 693h1v1h-1zM280 691h1v1h-1zM282 690h1v1h-1zM284 689h1v1h-1zM286 688h1v1h-1zM288 687h1v1h-1zM290 685h1v1h-1zM292 684h1v1h-1zM294 683h1v1h-1zM296 682h1v1h-1zM298 681h1v1h-1zM300 680h1v1h-1zM302 678h1v1h-1zM304 677h1v1h-1zM306 676h1v1h-1zM308 675h1v1h-1zM310 674h1v1h-1zM312 673h1v1h-1zM314 671h1v1h-1zM316 670h1v1h-1zM318 669h1v1h-1zM320 668h1v1h-1zM322 667h1v1h-1zM324 666h1v1h-1zM326 664h1v1h-1zM328 663h1v1h-1zM330 662h1v1h-1zM332 661h1v1h-1zM334 660h1v1h-1zM336 659h1v1h-1zM338 657h1v1h-1zM340 656h1v1h-1zM342 655h1v1h-1zM344 654h1v1h-1zM346 653h1v1h-1zM348 652h1v1h-1zM350 650h1v1h-1zM352 649h1v1h-1zM354 648h1v1h-1zM356 647h1v1h-1zM358 646h1v1h-1zM360 645h1v1h-1zM362 643h1v1h-1zM364 642h1v1h-1zM366 641h1v1h-1zM368 640h1v1h-1zM370 639h1v1h-1zM372 638h1v1h-1zM374 636h1v1h-1zM376 635h1v1h-1zM378 634h1v1h-1zM380 633h1v1h-1zM382 632h1v1h-1zM384 630h1v1h-1zM386 629h1v1h-1zM388 628h1v1h-1zM390 627h1v1h-1zM392 626h1v1h-1zM394 625h1v1h-1zM396 623h1v1h-1zM398 622h1v1h-1zM400 621h1v1h-1zM402 620h1v1h-1zM404 619h1v1h-1zM406 618h1v1h-1zM408 616h1v1h-1zM410 615h1v1h-1zM412 614h1v1h-1zM414 613h1v1h-1zM416 612h1v1h-1zM418 611h1v1h-1zM420 609h1v1h-1zM422 608h1v1h-1zM424 607h1v1h-1zM426 606h1v1h-1zM428 605h1v1h-1zM430 604h1v1h-1zM432 602h1v1h-1zM434 601h1v1h-1zM436 600h1v1h-1zM438 599h1v1h-1zM440 598h1v1h-1zM442 597h1v1h-1zM444 595h1v1h-1zM446 594h1v1h-1zM448 593h1v1h-1zM450 592h1v1h-1zM452 591h1v1h-1zM454 590h1v1h-1zM456 588h1v1h-1zM458 587h1v1h-1zM460 586h1v1h-1zM462 585h1v1h-1zM464 584h1v1h-1zM466 582h1v1h-1zM468 581h1v1h-1zM470 580h1v1h-1zM472 579h1v1h-1zM474 578h1v1h-1zM476 577h1v1h-1zM478 575h1v1h-1zM480 574h1v1h-1zM482 573h1v1h-1zM484 572h1v1h-1zM486 571h1v1h-1zM488 570h1v1h-1zM490 568h1v1h-1zM492 567h1v1h-1zM494 566h1v1h-1zM496 565h1v1h-1zM498 564h1v1h-1zM500 563h1v1h-1zM502 561h1v1h-1zM504 560h1v1h-1zM506 559h1v1h-1zM508 558h1v1h-1zM510 557h1v1h-1zM512 556h1v1h-1zM514 554h1v1h-1zM516 553h1v1h-1zM518 552h1v1h-1zM520 551h1v1h-1zM522 550h1v1h-1zM524 549h1v1h-1zM526 547h1v1h-1zM528 546h1v1h-1zM530 545h1v1h-1zM532 544h1v1h-1zM534 543h1v1h-1zM536 542h1v1h-1zM538 540h1v1h-1zM540 539h1v1h-1zM542 538h1v1h-1zM544 537h1v1h-1zM546 536h1v1h-1zM548 535h1v1h-1zM550 533h1v1h-1zM552 532h1v1h-1zM554 531h1v1h-1zM556 530h1v1h-1zM558 529h1v1h-1zM560 527h1v1h-1zM562 526h1v1h-1zM564 525h1v1h-1zM566 524h1v1h-1zM568 523h1v1h-1zM570 522h1v1h-1zM572 520h1v1h-1zM574 519h1v1h-1zM576 518h1v1h-1zM578 517h1v1h-1zM580 516h1v1h-1zM582 515h1v1h-1zM584 513h1v1h-1zM586 512h1v1h-1zM588 511h1v1h-1zM590 510h1v1h-1zM592 509h1v1h-1zM594 508h1v1h-1zM596 506h1v1h-1zM598 505h1v1h-1zM600 504h1v1h-1zM602 503h1v1h-1zM604 502h1v1h-1zM606 501h1v1h-1zM608 499h1v1h-1zM610 498h1v1h-1zM612 497h1v1h-1zM614 496h1v1h-1zM616 495h1v1h-1zM618 494h1v1h-1zM620 492h1v1h-1zM622 491h1v1h-1zM624 490h1v1h-1zM626 489h1v1h-1zM628 488h1v1h-1zM630 487h1v1h-1zM632 485h1v1h-1zM634 484h1v1h-1zM636 483h1v1h-1zM638 482h1v1h-1zM640 481h1v1h-1zM642 480h1v1h-1zM644 478h1v1h-1zM646 477h1v1h-1zM648 476h1v1h-1zM650 475h1v1h-1zM652 474h1v1h-1zM654 472h1v1h-1zM656 471h1v1h-1zM658 470h1v1h-1zM660 469h1v1h-1zM662 468h1v1h-1zM664 467h1v1h-1zM666 465h1v1h-1zM668 464h1v1h-1zM670 463h1v1h-1zM672 462h1v1h-1zM674 461h1v1h-1zM71 493h1v1h-1zM73 494h1v1h-1zM75 495h1v1h-1zM77 496h1v1h-1zM79 497h1v1h-1zM81 498h1v1h-1zM83 499h1v1h-1zM85 500h1v1h-1zM87 501h1v1h-1zM89 502h1v1h-1zM91 503h1v1h-1zM93 504h1v1h-1zM95 505h1v1h-1zM97 506h1v1h-1zM99 507h1v1h-1zM101 508h1v1h-1zM103 509h1v1h-1zM105 510h1v1h-1zM107 511h1v1h-1zM109 512h1v1h-1zM111 513h1v1h-1zM113 514h1v1h-1zM115 515h1v1h-1zM117 516h1v1h-1zM119 517h1v1h-1zM121 518h1v1h-1zM123 519h1v1h-1zM125 520h1v1h-1zM127 521h1v1h-1zM129 522h1v1h-1zM131 523h1v1h-1zM133 524h1v1h-1zM135 525h1v1h-1zM137 526h1v1h-1zM139 527h1v1h-1zM141 528h1v1h-1zM143 529h1v1h-1zM145 530h1v1h-1zM147 531h1v1h-1zM149 532h1v1h-1zM151 533h1v1h-1zM153 534h1v1h-1zM155 535h1v1h-1zM157 536h1v1h-1zM159 537h1v1h-1zM161 538h1v1h-1zM163 539h1v1h-1zM165 540h1v1h-1zM167 541h1v1h-1zM169 542h1v1h-1zM171 543h1v1h-1zM173 544h1v1h-1zM175 545h1v1h-1zM177 546h1v1h-1zM179 547h1v1h-1zM181 548h1v1h-1zM183 549h1v1h-1zM185 550h1v1h-1zM187 551h1v1h-1zM189 552h1v1h-1zM191 553h1v1h-1zM193 554h1v1h-1zM195 555h1v1h-1zM197 556h1v1h-1zM199 557h1v1h-1zM201 558h1v1h-1zM203 559h1v1h-1zM205 560h1v1h-1zM207 561h1v1h-1zM209 562h1v1h-1zM211 563h1v1h-1zM213 564h1v1h-1zM215 565h1v1h-1zM217 566h1v1h-1zM219 567h1v1h-1zM221 568h1v1h-1zM223 569h1v1h-1zM225 570h1v1h-1zM227 571h1v1h-1zM229 572h1v1h-1zM231 573h1v1h-1zM233 574h1v1h-1zM235 575h1v1h-1zM237 576h1v1h-1zM239 577h1v1h-1zM241 578h1v1h-1zM243 579h1v1h-1zM245 580h1v1h-1zM247 581h1v1h-1zM249 582h1v1h-1zM251 583h1v1h-1zM253 584h1v1h-1zM255 585h1v1h-1zM257 586h1v1h-1zM259 587h1v1h-1zM261 588h1v1h-1zM263 589h1v1h-1zM265 590h1v1h-1zM267 591h1v1h-1zM269 592h1v1h-1zM271 593h1v1h-1zM273 594h1v1h-1zM275 595h1v1h-1zM277 596h1v1h-1zM279 597h1v1h-1zM281 598h1v1h-1zM283 599h1v1h-1zM285 600h1v1h-1zM287 601h1v1h-1zM289 602h1v1h-1zM291 603h1v1h-1zM293 604h1v1h-1zM295 605h1v1h-1zM297 606h1v1h-1zM299 607h1v1h-1zM301 608h1v1h-1zM303 609h1v1h-1zM305 610h1v1h-1zM307 611h1v1h-1zM309 612h1v1h-1zM311 613h1v1h-1zM313 614h1v1h-1zM315 615h1v1h-1zM317 616h1v1h-1zM319 617h1v1h-1zM321 618h1v1h-1zM323 619h1v1h-1zM325 620h1v1h-1zM327 621h1v1h-1zM329 622h1v1h-1zM331 623h1v1h-1zM333 624h1v1h-1zM335 625h1v1h-1zM337 626h1v1h-1zM339 627h1v1h-1zM341 628h1v1h-1zM343 629h1v1h-1zM345 630h1v1h-1zM347 631h1v1h-1zM349 632h1v1h-1zM351 633h1v1h-1zM353 634h1v1h-1zM355 635h1v1h-1zM357 636h1v1h-1zM359 637h1v1h-1zM361 638h1v1h-1zM363 639h1v1h-1zM365 640h1v1h-1zM367 641h1v1h-1zM369 642h1v1h-1zM371 643h1v1h-1zM373 644h1v1h-1zM375 645h1v1h-1zM377 646h1v1h-1zM379 647h1v1h-1zM381 648h1v1h-1zM383 649h1v1h-1zM385 650h1v1h-1zM387 651h1v1h-1zM389 652h1v1h-1zM391 653h1v1h-1zM393 654h1v1h-1zM395 655h1v1h-1zM397 656h1v1h-1zM399 657h1v1h-1zM401 658h1v1h-1zM403 659h1v1h-1zM405 660h1v1h-1zM407 661h1v1h-1zM409 662h1v1h-1zM411 663h1v1h-1zM413 664h1v1h-1zM415 665h1v1h-1zM417 666h1v1h-1zM419 667h1v1h-1zM421 668h1v1h-1zM423 669h1v1h-1zM425 670h1v1h-1zM427 671h1v1h-1zM429 672h1v1h-1zM431 673h1v1h-1zM433 674h1v1h-1zM435 675h1v1h-1zM437 676h1v1h-1zM439 677h1v1h-1zM441 678h1v1h-1zM443 679h1v1h-1zM445 680h1v1h-1zM447 681h1v1h-1zM449 682h1v1h-1zM451 683h1v1h-1zM453 684h1v1h-1zM455 685h1v1h-1z" fill="#000"/><g stroke="#000" stroke-width="1.1"><line x1="72.7" y1="342.0" x2="91.0" y2="541.6"/><line x1="359.0" y1="174.0" x2="377.3" y2="374.0"/><line x1="633.8" y1="311.8" x2="652.0" y2="511.4"/></g><polygon points="377.30,374.00 652.00,511.40 365.80,679.50 91.00,541.60" fill="none" stroke="#ff7a1a" stroke-width="1.1"/><g fill="#000080" stroke="#000080"><line x1="377.3" y1="374.5" x2="377.6" y2="383.0" stroke-width="1.3"/><ellipse cx="377.8" cy="384.0" rx="3" ry="2.3" stroke="none"/><circle cx="368.5" cy="378.5" r="2.2" stroke="none"/><circle cx="385.7" cy="377.8" r="2.2" stroke="none"/></g><g fill="#000080" stroke="#000080"><line x1="91.0" y1="542.1" x2="91.3" y2="550.6" stroke-width="1.3"/><ellipse cx="91.5" cy="551.6" rx="3" ry="2.3" stroke="none"/><circle cx="82.2" cy="546.1" r="2.2" stroke="none"/><circle cx="99.4" cy="545.4" r="2.2" stroke="none"/></g><g fill="#000080" stroke="#000080"><line x1="652.0" y1="511.9" x2="652.3" y2="520.4" stroke-width="1.3"/><ellipse cx="652.5" cy="521.4" rx="3" ry="2.3" stroke="none"/><circle cx="643.2" cy="515.9" r="2.2" stroke="none"/><circle cx="660.4" cy="515.1999999999999" r="2.2" stroke="none"/></g><g fill="#000080" stroke="#000080"><line x1="365.8" y1="680.0" x2="366.1" y2="688.5" stroke-width="1.3"/><ellipse cx="366.3" cy="689.5" rx="3" ry="2.3" stroke="none"/><circle cx="357.0" cy="684.0" r="2.2" stroke="none"/><circle cx="374.2" cy="683.3" r="2.2" stroke="none"/></g><g><line x1="652.5" y1="511.5" x2="655" y2="540" stroke="#1010ff" stroke-width="1.3"/><path d="M649.5 538 Q655 536 660 538 L655.5 551.3 Z" fill="#1010ff"/><path d="M621.3 497.5 L629.5 494.8 Q633.8 497.5 632.2 502 Q630 505.5 626.5 504.5 Z" fill="#c80000"/><path d="M620.3 528.5 L628.5 524.8 Q632.8 526.5 632 530 Q629.5 532 626 531.5 Z" fill="#0a7a0a"/></g><rect x="198" y="380" width="19" height="15" fill="#ececec"/><rect x="479" y="334.8" width="19" height="15.2" fill="#cdcdcd"/><rect x="427" y="509" width="19" height="15" fill="#dadcdd"/></g></svg>
<div class="t" style="left:199.90px;top:387.12px;font-size:11.5px;color:#111;transform:scaleX(1.0419);">[3]</div>
<div class="t" style="left:480.90px;top:342.02px;font-size:11.5px;color:#111;transform:scaleX(1.0419);">[4]</div>
<div class="t" style="left:429.00px;top:516.12px;font-size:11.5px;color:#f37021;transform:scaleX(1.0184);">[5]</div>
<svg width="1418" height="719" viewBox="0 0 1418 719">
<rect x="773" y="157" width="27" height="25.6" fill="#d0d0d0"/>
<g fill="none" stroke="#000" stroke-width="1.3">
 <path d="M661.5 164.7 H674.1 V177.7 M663.9 162.3 V174.1 H676.9"/>
 <path d="M686.3 168 L690.1 171.4 L693.9 168 M731.2 168 L735 171.4 L738.9 168" stroke-width="1"/>
 <path d="M712.6 176.5 Q708.5 178.3 706.6 174.8 Q705.5 171.5 712 164.6 M715.4 163.6 Q718.5 162 720.8 164.5 Q722.5 167.5 715.8 175.1" stroke-width="1.2"/>
 <path d="M708.3 164.3 H712.5 V168.7 M715.4 171.2 V175.4 H719.8" stroke-width="1.5"/>
 <path d="M752.5 166.5 L756.5 162.5 H767.5 V173.5 L763.5 177.5 H752.5 Z M752.5 166.5 H763.5 V177.5 M763.5 166.5 L767.5 162.5 M756.5 162.5 V170 M756.5 170 L752.5 174 M756.5 170 H760"/>
 <path d="M808 168.5 L818 163.9 L823.5 166 V171 L813.5 175.3 L808 173 Z M808 168.5 L813.5 170.7 L823.5 166 M813.5 170.7 V175.3"/>
 <path d="M835.5 170 L842.3 163.5 L849.2 170 M837.5 168.5 V176.5 H840.5 V172 H844 V176.5 H847.2 V168.5" stroke="#777" stroke-width="1.1"/>
 <path d="M861.5 166.5 V162.5 H865.5 M861.5 162.5 L865 166 M877 166.5 V162.5 H873 M877 162.5 L873.5 166 M861.5 173.5 V177.5 H865.5 M861.5 177.5 L865 174 M877 173.5 V177.5 H873 M877 177.5 L873.5 174" stroke-width="1.1"/>
</g>
<path d="M778.6 166.5 L782.6 162.3 H794.8 V173.7 L790.8 177.7 H778.6 Z" fill="#000"/>
<path d="M790.8 166.5 L794.8 162.5 M790.8 166.5 V177.7" stroke="#555" stroke-width="0.8" fill="none"/>
<rect x="698" y="159.5" width="1" height="21" fill="#c0c0c0"/><rect x="743" y="159.5" width="1" height="21" fill="#c0c0c0"/>
<g>
 <path d="M786.8 219.7 A42.1 20.1 0 1 0 871 219.7 A42.1 20.1 0 1 0 786.8 219.7 Z M795.4 219.7 A33.5 14.2 0 1 1 862.4 219.7 A33.5 14.2 0 1 1 795.4 219.7 Z" fill="#c2c2c2" fill-rule="evenodd"/>
 <polygon points="803.4,199.3 827.2,182.8 830.1,212.5 803.4,228.6" fill="#6e6e6e" stroke="#111" stroke-width="1"/>
 <polygon points="827.2,182.8 849.6,197.4 855,225.6 830.1,212.5" fill="#6a6a6a" stroke="#111" stroke-width="1"/>
 <polygon points="803.4,228.6 830.1,212.5 855,225.6 828.7,237.3" fill="#555" stroke="#111" stroke-width="1"/>
 <path d="M804 205 L827.5 194 L850.5 203 L852 211 L830 204 L804 215 Z" fill="#888" opacity="0.35"/>
 <path d="M791 209 L803.4 213.5 M791 209 L795 208.5 M856 207.5 H874 M848 234 L855.5 232 M802 238.5 L809 236" stroke="#222" stroke-width="1" fill="none"/>
 <rect x="862.5" y="202" width="3.2" height="10.5" fill="#222"/>
 <path d="M815 206 V210 M842 205 L844 210 M826 229 L832 227" stroke="#ddd" stroke-width="1" fill="none"/>
</g>
</svg>
<svg width="1418" height="719" viewBox="0 0 1418 719"><g fill="none" stroke="#f37021" stroke-width="1.1">
<path d="M720 294 L723.9 298 L727.8 294"/>
<path d="M741.1 316 L745 320 L748.9 316"/>
<path d="M741.1 448 L745 452 L748.9 448"/>
<path d="M741.1 558 L745 562 L748.9 558"/>
</g>
<rect x="756.3" y="571.2" width="107.6" height="20.3" fill="#f37021"/>
<rect x="755.05" y="568.95" width="107.6" height="22.7" rx="11.3" fill="#f37021" stroke="#ff0000" stroke-width="3.9"/></svg>
<div class="t" style="left:741.00px;top:295.04px;font-size:12px;font-weight:bold;color:#333;transform:scaleX(0.9612);">DRM1</div>
<div class="t" style="left:761.60px;top:317.04px;font-size:12px;font-weight:bold;color:#333;transform:scaleX(0.9928);">Members</div>
<div class="t" style="left:761.60px;top:449.04px;font-size:12px;font-weight:bold;color:#333;transform:scaleX(0.9706);">Operations</div>
<div class="t" style="left:761.00px;top:559.14px;font-size:12px;font-weight:bold;color:#333;transform:scaleX(0.9681);">Supports</div>
<div class="t" style="left:761.60px;top:339.04px;font-size:12.3px;color:#505050;transform:scaleX(0.7829);">SB1</div>
<div class="t" style="left:761.60px;top:361.04px;font-size:12.3px;color:#505050;transform:scaleX(0.8736);">NV1</div>
<div class="t" style="left:761.60px;top:383.04px;font-size:12.3px;color:#505050;transform:scaleX(0.9071);">NV2</div>
<div class="t" style="left:761.60px;top:405.04px;font-size:12.3px;color:#505050;transform:scaleX(0.8987);">NV3</div>
<div class="t" style="left:761.60px;top:427.04px;font-size:12.3px;color:#505050;transform:scaleX(0.9154);">NV4</div>
<div class="t" style="left:761.30px;top:471.04px;font-size:12.3px;color:#505050;transform:scaleX(0.8473);">CUT1</div>
<div class="t" style="left:761.30px;top:493.04px;font-size:12.3px;color:#505050;transform:scaleX(0.8660);">CUT2</div>
<div class="t" style="left:761.30px;top:515.04px;font-size:12.3px;color:#505050;transform:scaleX(0.8628);">CUT3</div>
<div class="t" style="left:761.30px;top:537.04px;font-size:12.3px;color:#505050;transform:scaleX(0.8753);">CUT4</div>
<div class="t" style="left:761.00px;top:581.04px;font-size:12px;color:#fff;transform:scaleX(0.7804);">SS1</div>
<div style="position:absolute;left:889px;top:157px;width:529px;height:24.8px;background:#f37021"></div>
<div class="t" style="left:899.00px;top:170.04px;font-size:12px;font-weight:bold;color:#fff;transform:scaleX(0.8686);">SS1</div>
<div class="t" style="left:930.40px;top:170.04px;font-size:12px;color:#fff;transform:scaleX(1.0057);">[Support]</div>
<div class="t" style="left:1270.70px;top:170.04px;font-size:12px;font-weight:bold;color:#fff;transform:scaleX(1.0437);">New</div>
<div class="t" style="left:1316.00px;top:170.04px;font-size:12px;font-weight:bold;color:#fff;transform:scaleX(0.9200);">Copy</div>
<div class="t" style="left:1364.00px;top:170.04px;font-size:12px;font-weight:bold;color:#fff;transform:scaleX(1.0444);">Delete</div>
<div class="t" style="left:923.30px;top:204.14px;font-size:12px;font-weight:bold;color:#333;transform:scaleX(0.9605);">Surface support</div>
<div class="t" style="left:923.80px;top:336.14px;font-size:12px;font-weight:bold;color:#333;transform:scaleX(0.9020);">Position</div>
<div class="t" style="left:923.30px;top:231.14px;font-size:12.3px;color:#333;transform:scaleX(0.9665);">Direction</div>
<div class="t" style="left:923.30px;top:253.04px;font-size:12.3px;color:#333;transform:scaleX(0.8313);">X</div>
<div class="t" style="left:923.30px;top:277.04px;font-size:12.3px;color:#333;transform:scaleX(0.8558);">Y</div>
<div class="t" style="left:923.30px;top:301.04px;font-size:12.3px;color:#333;transform:scaleX(0.8796);">Z</div>
<div class="t" style="left:923.60px;top:361.44px;font-size:12.3px;color:#333;transform:scaleX(0.9368);">Master</div>
<div class="t" style="left:923.60px;top:385.04px;font-size:12.3px;color:#333;transform:scaleX(0.9550);">Related to original surface</div>
<div class="t" style="left:923.60px;top:408.94px;font-size:12.3px;color:#333;transform:scaleX(0.9039);">Surface</div>
<div class="t" style="left:923.60px;top:433.04px;font-size:12.3px;color:#333;transform:scaleX(0.9568);">Geometry type</div>
<svg width="1418" height="719" viewBox="0 0 1418 719"><path d="M907.2 202 L911.15 206 L915.1 202 M907.2 334 L911.15 338 L915.1 334" fill="none" stroke="#f37021" stroke-width="1.1"/><rect x="1072.1" y="218.1" width="43.4" height="19.2" fill="#d6d6d6"/><rect x="1114.8" y="242.8" width="208.5" height="18.8" fill="#fff" stroke="#d6d6d6" stroke-width="1"/><rect x="1328.9" y="242.3" width="19.7" height="19.5" fill="#d6d6d6"/><path d="M1331.3 260.0 L1332.5 255.20000000000002 L1342.2 245.5 Q1343.6 244.10000000000002 1345 245.5 L1346.8 247.3 Q1348.2 248.70000000000002 1346.8 250.10000000000002 L1337.1 259.8 Z M1332.5 255.20000000000002 L1336.1 258.8 M1340.4 247.3 L1345 251.9" fill="none" stroke="#1a1a1a" stroke-width="1.1" stroke-linejoin="round"/><rect x="1072.5" y="248.20000000000002" width="11" height="10.6" fill="#fff" stroke="#d6d6d6" stroke-width="1"/><path d="M1074.9 254.10000000000002 L1077.6 256.7 L1081.8 251.9" fill="none" stroke="#f37021" stroke-width="1.5"/><rect x="1114.8" y="266.5" width="208.5" height="18.8" fill="#fff" stroke="#d6d6d6" stroke-width="1"/><rect x="1328.9" y="266.0" width="19.7" height="19.5" fill="#d6d6d6"/><path d="M1331.3 283.7 L1332.5 278.9 L1342.2 269.2 Q1343.6 267.8 1345 269.2 L1346.8 271.0 Q1348.2 272.4 1346.8 273.8 L1337.1 283.5 Z M1332.5 278.9 L1336.1 282.5 M1340.4 271.0 L1345 275.6" fill="none" stroke="#1a1a1a" stroke-width="1.1" stroke-linejoin="round"/><rect x="1072.5" y="271.9" width="11" height="10.6" fill="#fff" stroke="#d6d6d6" stroke-width="1"/><path d="M1074.9 277.8 L1077.6 280.4 L1081.8 275.6" fill="none" stroke="#f37021" stroke-width="1.5"/><rect x="1114.8" y="290.8" width="208.5" height="18.8" fill="#fff" stroke="#d6d6d6" stroke-width="1"/><rect x="1328.9" y="290.3" width="19.7" height="19.5" fill="#d6d6d6"/><path d="M1331.3 308.0 L1332.5 303.2 L1342.2 293.5 Q1343.6 292.1 1345 293.5 L1346.8 295.3 Q1348.2 296.7 1346.8 298.1 L1337.1 307.8 Z M1332.5 303.2 L1336.1 306.8 M1340.4 295.3 L1345 299.90000000000003" fill="none" stroke="#1a1a1a" stroke-width="1.1" stroke-linejoin="round"/><rect x="1072.5" y="296.2" width="11" height="10.6" fill="#fff" stroke="#d6d6d6" stroke-width="1"/><path d="M1074.9 302.1 L1077.6 304.7 L1081.8 299.90000000000003" fill="none" stroke="#f37021" stroke-width="1.5"/><rect x="1089" y="290.3" width="19.7" height="19.4" fill="#d6d6d6"/><path d="M1099.5 292.6 L1095.6 297.4 H1103.4 Z" fill="none" stroke="#111" stroke-width="1.3" stroke-linejoin="miter"/><path d="M1099.5 298.8 L1101.8 306.2 L1100 305.2 V307.9 H1099 V305.2 L1097.2 306.2 Z" fill="#111"/><rect x="1072.5" y="378.9" width="11" height="10.6" fill="#fff" stroke="#d6d6d6" stroke-width="1"/><path d="M1074.9 384.6 L1077.6 387.2 L1081.8 382.4" fill="none" stroke="#f37021" stroke-width="1.5"/><rect x="1072.8" y="350.8" width="337" height="18.5" fill="#fff" stroke="#d6d6d6" stroke-width="1"/><path d="M1396 358.3 L1399.8 361.8 L1403.6 358.3" fill="none" stroke="#222" stroke-width="1.1"/><rect x="1072.8" y="399.0" width="337" height="18.5" fill="#fff" stroke="#d6d6d6" stroke-width="1"/><path d="M1396 406.5 L1399.8 410.0 L1403.6 406.5" fill="none" stroke="#222" stroke-width="1.1"/><rect x="1072.8" y="422.9" width="337" height="18.5" fill="#fff" stroke="#d6d6d6" stroke-width="1"/><path d="M1396 430.4 L1399.8 433.9 L1403.6 430.4" fill="none" stroke="#222" stroke-width="1.1"/><rect x="918" y="213" width="498" height="113" rx="10" fill="none" stroke="#ff0000" stroke-width="3.9"/></svg>
<div class="t" style="left:1080.20px;top:228.37px;font-size:12.5px;color:#333;transform:scaleX(0.9138);">Local</div>
<div class="t" style="left:1123.60px;top:228.37px;font-size:12.5px;color:#333;transform:scaleX(0.9080);">Global</div>
<div class="t" style="left:1354.50px;top:252.24px;font-size:12.3px;color:#222;transform:scaleX(1.0876);">MN/m/m</div>
<div class="t" style="left:1406.30px;top:247.65px;font-size:6.5px;color:#222;transform:scaleX(0.8870);">2</div>
<div class="t" style="left:1354.50px;top:276.24px;font-size:12.3px;color:#222;transform:scaleX(1.0876);">MN/m/m</div>
<div class="t" style="left:1406.30px;top:271.65px;font-size:6.5px;color:#222;transform:scaleX(0.8870);">2</div>
<div class="t" style="left:1354.50px;top:300.54px;font-size:12.3px;color:#222;transform:scaleX(1.0876);">MN/m/m</div>
<div class="t" style="left:1406.30px;top:295.95px;font-size:6.5px;color:#222;transform:scaleX(0.8870);">2</div>
<div class="t" style="left:1120.60px;top:252.87px;font-size:12.5px;color:#111;">1</div>
<div class="t" style="left:1120.60px;top:276.57px;font-size:12.5px;color:#111;">1</div>
<div class="t" style="left:1120.30px;top:300.87px;font-size:12.5px;color:#111;">15</div>
<div class="t" style="left:1078.30px;top:361.44px;font-size:12.3px;color:#111;transform:scaleX(0.7958);">SB1</div>
<div class="t" style="left:1078.30px;top:408.94px;font-size:12.3px;color:#111;">5</div>
<div class="t" style="left:1078.30px;top:433.04px;font-size:12.3px;color:#111;transform:scaleX(0.9479);">Whole surface</div>
<svg width="1418" height="719" viewBox="0 0 1418 719"><path d="M1302.3 247 Q1305 242.4 1310 242.4 Q1316.6 242.6 1316.6 249.8 Q1316.6 254.5 1312 259.2 L1302.5 268.9 H1318.5" fill="none" stroke="#ff0000" stroke-width="4.1" stroke-linejoin="round"/></svg>
<svg width="1418" height="719" viewBox="0 0 1418 719"><path d="M1013.6 281 H1018.9 V308.9 H1023.4 Q1024.9 308.9 1024.9 310.4 Q1024.9 311.9 1023.4 311.9 H1008.4 Q1006.9 311.9 1006.9 310.4 Q1006.9 308.9 1008.4 308.9 H1013.8 V286.2 L1008.7 289.7 Q1007 290.6 1006.9 288.6 Q1006.9 287.3 1008 286.6 Z" fill="#ff0000"/></svg>
<div class="t" style="left:987.60px;top:469.94px;font-size:17.5px;color:#222;transform:scaleX(0.8140);">Soil Description</div>
<div class="t" style="left:987.80px;top:490.34px;font-size:17.5px;color:#222;transform:scaleX(0.8140);">Humus soil or peat</div>
<div class="t" style="left:1217.20px;top:490.34px;font-size:17.5px;color:#222;transform:scaleX(0.8140);">5000 - 15000</div>
<div class="t" style="left:987.80px;top:510.74px;font-size:17.5px;color:#222;transform:scaleX(0.8140);">Recent embankment</div>
<div class="t" style="left:1217.20px;top:510.74px;font-size:17.5px;color:#222;transform:scaleX(0.8140);">10000 - 20000</div>
<div class="t" style="left:987.80px;top:531.14px;font-size:17.5px;color:#222;transform:scaleX(0.8140);">Fine or slightly compacted soil</div>
<div class="t" style="left:1217.20px;top:531.14px;font-size:17.5px;color:#222;transform:scaleX(0.8140);">15000 - 30000</div>
<div class="t" style="left:987.80px;top:551.54px;font-size:17.5px;color:#222;transform:scaleX(0.8140);">Well compacted sand</div>
<div class="t" style="left:1217.20px;top:551.54px;font-size:17.5px;color:#222;transform:scaleX(0.8140);">50000 - 100000</div>
<div class="t" style="left:987.80px;top:571.94px;font-size:17.5px;color:#222;transform:scaleX(0.8140);">Very well compacted sand</div>
<div class="t" style="left:1217.20px;top:571.94px;font-size:17.5px;color:#222;transform:scaleX(0.8140);">100000 - 150000</div>
<div class="t" style="left:987.80px;top:592.34px;font-size:17.5px;color:#222;transform:scaleX(0.8140);">Loam or clay (moist)</div>
<div class="t" style="left:1217.20px;top:592.34px;font-size:17.5px;color:#222;transform:scaleX(0.8140);">30000 - 60000</div>
<div class="t" style="left:987.80px;top:612.74px;font-size:17.5px;color:#222;transform:scaleX(0.8140);">Loam or clay (dry)</div>
<div class="t" style="left:1217.20px;top:612.74px;font-size:17.5px;color:#222;transform:scaleX(0.8140);">80000 - 100000</div>
<div class="t" style="left:987.80px;top:633.14px;font-size:17.5px;color:#222;transform:scaleX(0.8140);">Clay with sand</div>
<div class="t" style="left:1217.20px;top:633.14px;font-size:17.5px;color:#222;transform:scaleX(0.8140);">80000 - 100000</div>
<div class="t" style="left:987.80px;top:653.54px;font-size:17.5px;color:#222;transform:scaleX(0.8140);">Crushed stone with sand</div>
<div class="t" style="left:1217.20px;top:653.54px;font-size:17.5px;color:#222;transform:scaleX(0.8140);">100000 - 150000</div>
<div class="t" style="left:987.80px;top:673.94px;font-size:17.5px;color:#222;transform:scaleX(0.8140);">Coarse crushed stone</div>
<div class="t" style="left:1217.20px;top:673.94px;font-size:17.5px;color:#222;transform:scaleX(0.8140);">200000 - 250000</div>
<div class="t" style="left:987.80px;top:694.34px;font-size:17.5px;color:#222;transform:scaleX(0.8140);">Well compacted crushed stone</div>
<div class="t" style="left:1217.20px;top:694.34px;font-size:17.5px;color:#222;transform:scaleX(0.8140);">200000 - 300000</div>
<div class="t" style="left:1217.20px;top:469.94px;font-size:17.5px;color:#222;transform:scaleX(0.9618);font-style:italic;">k</div>
<div class="t" style="left:1224.00px;top:474.52px;font-size:11.5px;color:#222;transform:scaleX(0.9565);">s</div>
<div class="t" style="left:1232.90px;top:469.94px;font-size:17.5px;color:#222;transform:scaleX(0.8140);">(kN/m</div>
<div class="t" style="left:1271.66px;top:466.19px;font-size:11px;color:#222;transform:scaleX(0.8518);">2</div>
<div class="t" style="left:1277.86px;top:469.94px;font-size:17.5px;color:#222;transform:scaleX(0.8140);">/m)</div>
<svg width="1418" height="719" viewBox="0 0 1418 719"><rect x="987" y="459" width="339" height="1" fill="#555"/><rect x="987" y="480" width="339" height="1" fill="#555"/><rect x="980.5" y="518.4" width="337" height="25.4" rx="12.5" fill="none" stroke="#ff0000" stroke-width="4.4"/></svg>
<svg width="1418" height="719" viewBox="0 0 1418 719"><path d="M1064 407.8 L451 514" stroke="#ff0000" stroke-width="4.2" fill="none"/><path d="M458.8 502.6 L449.5 513.6 L461.3 521.6" stroke="#ff0000" stroke-width="4.3" fill="none" stroke-linejoin="miter" stroke-miterlimit="3"/></svg></body></html>
